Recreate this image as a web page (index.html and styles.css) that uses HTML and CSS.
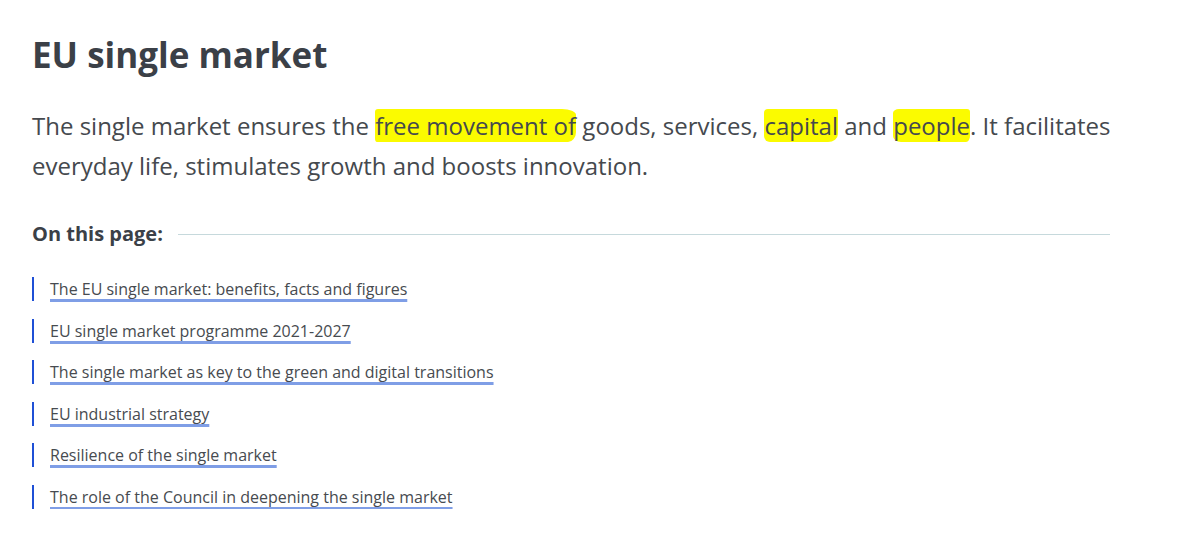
FILE: index.html
```html
<!DOCTYPE html>
<html lang="en">
<head>
<meta charset="utf-8">
<title>EU single market</title>
<link rel="stylesheet" href="styles.css">
</head>
<body>
<main class="page">
  <h1 class="title">EU single market</h1>
  <p class="lead">The single market ensures the <span class="hl hl-a">free movement of</span> goods, services, <span class="hl hl-b">capital</span> and <span class="hl hl-c">people</span>. It facilitates everyday life, stimulates growth and boosts innovation.</p>
  <nav class="toc">
    <div class="toc-head">
      <span class="toc-label">On this page:</span>
      <span class="toc-rule"></span>
    </div>
    <ul class="toc-list">
      <li class="toc-item"><a class="toc-link" href="#a">The EU single market: benefits, facts and figures</a></li>
      <li class="toc-item"><a class="toc-link" href="#b">EU single market programme 2021-2027</a></li>
      <li class="toc-item"><a class="toc-link" href="#c">The single market as key to the green and digital transitions</a></li>
      <li class="toc-item"><a class="toc-link" href="#d">EU industrial strategy</a></li>
      <li class="toc-item"><a class="toc-link" href="#e">Resilience of the single market</a></li>
      <li class="toc-item"><a class="toc-link" href="#f">The role of the Council in deepening the single market</a></li>
    </ul>
  </nav>
</main>
</body>
</html>
```
FILE: styles.css
```css
html, body {
  margin: 0;
  padding: 0;
  background: #ffffff;
}
body {
  font-family: "Open Sans", "Liberation Sans", sans-serif;
  color: #3f4348;
}
.page {
  width: 1078px;
  padding: 31px 0 0 32px;
}
.title {
  margin: 0;
  font-size: 35px;
  line-height: 48px;
  font-weight: 700;
  color: #3b4047;
}
.lead {
  margin: 27px 0 0;
  width: 1092px;
  font-size: 24px;
  line-height: 40px;
  color: #45494e;
}
.hl {
  background: #fbfb00;
}
.hl-a {
  border-radius: 3px 14px 8px 2px / 3px 6px 10px 4px;
}
.hl-b {
  border-radius: 4px 2px 10px 6px / 4px 3px 8px 6px;
}
.hl-c {
  border-radius: 6px 3px 4px 8px / 4px 3px 6px 6px;
}
.toc {
  margin-top: 34px;
}
.toc-head {
  display: flex;
  align-items: center;
  gap: 15px;
}
.toc-label {
  font-size: 20px;
  font-weight: 700;
  color: #3b4047;
  line-height: 28px;
}
.toc-rule {
  flex: 1;
  height: 1px;
  background: #c6d9dc;
}
.toc-list {
  list-style: none;
  margin: 29px 0 0;
  padding: 0;
  display: flex;
  flex-direction: column;
  gap: 17.6px;
}
.toc-item {
  border-left: 2px solid #1f50d6;
  padding-left: 16px;
  height: 24px;
  display: flex;
  align-items: flex-start;
}
.toc-link {
  font-size: 16px;
  line-height: 24px;
  color: #474b50;
  text-decoration: underline;
  text-decoration-color: #7f9ee6;
  text-decoration-thickness: 3px;
  text-underline-offset: 4px;
  text-decoration-skip-ink: none;
}
```
